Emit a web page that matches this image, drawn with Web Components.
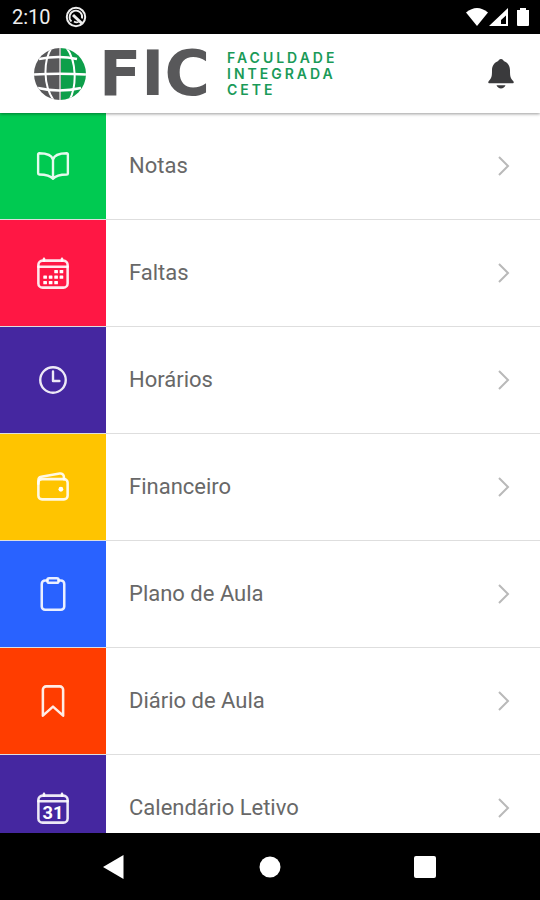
<!DOCTYPE html>
<html lang="pt-BR">
<head>
<meta charset="UTF-8">
<meta name="viewport" content="width=device-width, initial-scale=1">
<title>Faculdade Integrada CETE</title>
<style>
  body {
    margin: 0;
    font-family: Roboto, "Liberation Sans", sans-serif;
    background: #fff;
  }
</style>
</head>
<body>
<student-app></student-app>

<script>
/** Inner SVG markup of the menu icons, drawn on a 512 grid. */
const ICONS = {
  book: `<path d="M256 160c16-63.16 76.43-95.41 208-96a15.94 15.94 0 0116 16v288a16 16 0 01-16 16c-128 0-177.45 25.81-208 64-30.37-38-80-64-208-64-9.88 0-16-8.05-16-17.93V80a15.94 15.94 0 0116-16c131.57.59 192 32.84 208 96zM256 160v288"/>`,
  calendar: `<rect x="48" y="80" width="416" height="384" rx="60"/>
    <path d="M128 52v28M384 52v28M464 168H48"/>
    <g class="solid"><rect x="274" y="212" width="52" height="48" rx="8"/><rect x="350" y="212" width="52" height="48" rx="8"/>
    <rect x="118" y="290" width="52" height="48" rx="8"/><rect x="196" y="290" width="52" height="48" rx="8"/><rect x="274" y="290" width="52" height="48" rx="8"/><rect x="350" y="290" width="52" height="48" rx="8"/>
    <rect x="118" y="368" width="52" height="48" rx="8"/><rect x="196" y="368" width="52" height="48" rx="8"/><rect x="274" y="368" width="52" height="48" rx="8"/></g>`,
  clock: `<circle cx="256" cy="256" r="192"/><path d="M256 128v144h96"/>`,
  wallet: `<rect x="48" y="144" width="416" height="288" rx="52"/>
    <path d="M411.36 144v-30A50 50 0 00352 64.9L88.64 109.85A50 50 0 0048 159v49"/>
    <circle class="solid" cx="368" cy="288" r="34"/>`,
  clipboard: `<path d="M336 64h32a48 48 0 0148 48v320a48 48 0 01-48 48H144a48 48 0 01-48-48V112a48 48 0 0148-48h32"/>
    <rect x="176" y="32" width="160" height="64" rx="26"/>`,
  bookmark: `<path d="M352 48H160a48 48 0 00-48 48v368l144-128 144 128V96a48 48 0 00-48-48z"/>`,
  month: `<rect x="48" y="80" width="416" height="384" rx="60"/>
    <path d="M128 52v28M384 52v28M464 160H48"/>
    <text x="256" y="408" text-anchor="middle">31</text>`
};

/** Entries of the main menu. */
const MENU = [
  { label: "Notas", icon: "book", color: "#00ca51" },
  { label: "Faltas", icon: "calendar", color: "#ff1744" },
  { label: "Horários", icon: "clock", color: "#4527a0" },
  { label: "Financeiro", icon: "wallet", color: "#ffc400" },
  { label: "Plano de Aula", icon: "clipboard", color: "#2962ff" },
  { label: "Diário de Aula", icon: "bookmark", color: "#ff3d00" },
  { label: "Calendário Letivo", icon: "month", color: "#4527a0" }
];

/**
 * Android status bar. The slot receives the time.
 */
class StatusBar extends HTMLElement {
  constructor() {
    super();
    this.attachShadow({ mode: "open" }).innerHTML = `
      <style>
        :host {
          display: flex;
          align-items: center;
          gap: 14px;
          height: 34px;
          padding: 0 10px 0 12px;
          background: #000;
          color: #eee;
          font-size: 20px;
          line-height: 24px;
        }
        svg { display: block; }
        .system { display: flex; align-items: center; margin-left: auto; }
      </style>
      <slot></slot>
      <svg width="22" height="22" viewBox="0 0 22 22" fill="none" stroke="#eee" aria-hidden="true">
        <circle cx="11" cy="11" r="9.2" stroke-width="2"/>
        <path d="M6.500 15.500A6.300 6.300 0 1117 12.500" stroke-width="1.800"/>
        <path d="M8 9l9 8.500" stroke-width="3"/>
        <path d="M9 15.500q2 1.500 4.500.500" stroke-width="1.600"/>
      </svg>
      <div class="system">
        <svg width="64" height="20" viewBox="0 0 64 20" fill="#fff" aria-hidden="true">
          <path d="M0 5.500Q11 -3.500 22 5.500L11 19z"/>
          <path d="M42 1v18H23zM40 8.500l-5 4.500v4h5z" fill-rule="evenodd"/>
          <path d="M51 3h3V1h6v2h3v15q0 1-1 1H52q-1 0-1-1z"/>
        </svg>
      </div>
    `;
  }
}

/**
 * Logo of the school: globe, acronym and the full name in the slot.
 */
class SchoolLogo extends HTMLElement {
  constructor() {
    super();
    this.attachShadow({ mode: "open" }).innerHTML = `
      <style>
        :host { display: flex; align-items: center; }
        svg { display: block; flex: none; }
        .acronym {
          width: 128px;
          margin-left: 12px;
          font: 700 62px/60px "DejaVu Sans", sans-serif;
          color: #58585a;
        }
        .name {
          width: min-content;
          font: 600 14px/16px Inter, sans-serif;
          letter-spacing: 3px;
          color: #1a9a58;
        }
      </style>
      <svg width="54" height="54" viewBox="0 0 54 54" aria-hidden="true">
        <clipPath id="ball"><circle cx="27" cy="27" r="26"/></clipPath>
        <g clip-path="url(#ball)">
          <path fill="#58585a" d="M0 0h26v54H0z"/>
          <path fill="#b5b5b5" d="M26 0h2v54h-2z"/>
          <path fill="#0d9f4a" d="M28 0h26v54H28z"/>
          <g fill="none" stroke="#fff" stroke-width="2">
            <path d="M19 0C10 14 10 38 21 54M33 0C44 14 44 40 36 54"/>
            <path d="M6 12Q26 8 44 12M0 27.500Q26 26 54 27.500M5 41Q26 46 48 41" stroke-width="2.400"/>
          </g>
        </g>
      </svg>
      <span class="acronym">FIC</span>
      <span class="name"><slot></slot></span>
    `;
  }
}

/**
 * Top bar with the logo and the notifications button.
 */
class AppHeader extends HTMLElement {
  constructor() {
    super();
    this.attachShadow({ mode: "open" }).innerHTML = `
      <style>
        :host {
          display: flex;
          align-items: center;
          justify-content: space-between;
          height: 79px;
          padding: 0 22px 0 33px;
          box-sizing: border-box;
          background: #fff;
          box-shadow: 0 1px 3px rgba(0, 0, 0, 0.4);
          position: relative;
          z-index: 1;
        }
        button {
          padding: 4px;
          border: 0;
          background: none;
          cursor: pointer;
        }
        svg { display: block; }
      </style>
      <slot></slot>
      <button type="button" aria-label="Notificações">
        <svg width="26" height="30" viewBox="0 0 26 30" fill="#3a3a3c" aria-hidden="true">
          <path d="M13 0c1.500 0 2.500 1 2.700 2C20 3.500 22 7 22 11.500c0 6 .500 7.500 3.200 10.500.900 1.200.700 2.300-.700 2.300H1.500c-1.400 0-1.600-1.100-.700-2.300C3.500 19 4 17.500 4 11.500 4 7 6 3.500 10.300 2 10.500 1 11.500 0 13 0zM8.500 26.300h9c-.600 1.900-2.500 3.200-4.500 3.200s-3.900-1.300-4.500-3.200z"/>
        </svg>
      </button>
    `;
  }
}

/**
 * One row of the menu. The slot receives the label.
 *
 * @attr {string} icon - Key in ICONS.
 * @attr {string} color - Background of the icon tile.
 */
class MenuRow extends HTMLElement {
  constructor() {
    super();
    this.attachShadow({ mode: "open" });
  }

  connectedCallback() {
    this.render();
  }

  render() {
    this.shadowRoot.innerHTML = `
      <style>
        :host { display: block; }
        a {
          display: flex;
          align-items: stretch;
          color: #686868;
          font-size: 22px;
          line-height: 28px;
          text-decoration: none;
          border-bottom: 1px solid #dedede;
        }
        .tile {
          display: grid;
          place-items: center;
          width: 106px;
          height: 106px;
          background: ${this.getAttribute("color")};
        }
        .icon {
          width: 36px;
          height: 36px;
          fill: none;
          stroke: #fff;
          stroke-opacity: 0.9;
          stroke-width: 36;
          stroke-linecap: round;
          stroke-linejoin: round;
        }
        :host([icon="book"]) .icon, :host([icon="clock"]) .icon {
          width: 34px;
          height: 34px;
        }
        .icon .solid { fill: #fff; stroke: none; }
        .icon text {
          fill: #fff;
          stroke: none;
          font: 700 260px Roboto, sans-serif;
        }
        .label { flex: 1; align-self: center; padding-left: 23px; }
        .arrow { align-self: center; margin-right: 29px; }
      </style>
      <a href="#${this.getAttribute("icon")}">
        <span class="tile">
          <svg class="icon" viewBox="0 0 512 512" aria-hidden="true">${ICONS[this.getAttribute("icon")]}</svg>
        </span>
        <span class="label"><slot></slot></span>
        <svg class="arrow" width="14" height="20" viewBox="0 0 14 20" fill="none" stroke="#b9b9b9" stroke-width="2" aria-hidden="true">
          <path d="M2 1l9 9-9 9"/>
        </svg>
      </a>
    `;
  }
}

/**
 * Android navigation bar.
 */
class NavBar extends HTMLElement {
  constructor() {
    super();
    this.attachShadow({ mode: "open" }).innerHTML = `
      <style>
        :host {
          display: flex;
          align-items: center;
          justify-content: center;
          gap: 117px;
          height: 67px;
          background: #000;
        }
        button {
          padding: 7px;
          border: 0;
          background: none;
        }
        svg { display: block; fill: #fff; }
      </style>
      <button type="button" aria-label="Voltar"><svg width="24" height="24" viewBox="0 0 24 24"><path d="M20.500 0v24L0 12z"/></svg></button>
      <button type="button" aria-label="Início"><svg width="24" height="24" viewBox="0 0 24 24"><circle cx="12" cy="12" r="10.500"/></svg></button>
      <button type="button" aria-label="Recentes"><svg width="24" height="24" viewBox="0 0 24 24"><rect x="1" y="1" width="22" height="22" rx="2"/></svg></button>
    `;
  }
}

/**
 * Whole screen: bars at the top and bottom, scrolling menu between them.
 */
class StudentApp extends HTMLElement {
  constructor() {
    super();
    this.attachShadow({ mode: "open" }).innerHTML = `
      <style>
        :host {
          display: flex;
          flex-direction: column;
          height: 100vh;
        }
        status-bar, app-header, nav-bar { flex: none; }
        nav {
          flex: 1;
          min-height: 0;
          overflow-y: auto;
          scrollbar-width: none;
        }
      </style>
      <status-bar>2:10</status-bar>
      <app-header>
        <school-logo>FACULDADE INTEGRADA CETE</school-logo>
      </app-header>
      <nav>
        ${MENU.map(item => `<menu-row icon="${item.icon}" color="${item.color}">${item.label}</menu-row>`).join("")}
      </nav>
      <nav-bar></nav-bar>
    `;
  }
}

customElements.define("status-bar", StatusBar);
customElements.define("school-logo", SchoolLogo);
customElements.define("app-header", AppHeader);
customElements.define("menu-row", MenuRow);
customElements.define("nav-bar", NavBar);
customElements.define("student-app", StudentApp);
</script>
</body>
</html>
